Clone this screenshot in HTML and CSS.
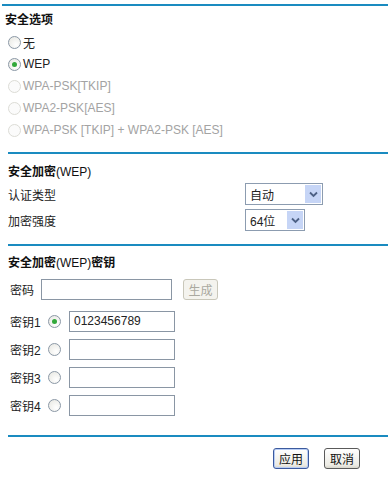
FILE: index.html
```html
<!DOCTYPE html>
<html lang="zh-CN">
<head>
    <meta charset="UTF-8">
    <title>无线安全设置</title>
    <link rel="stylesheet" href="styles.css">
</head>
<body>
    <div class="section first">
        <div class="rule"></div>
        <div class="title">安全选项</div>
        <div class="opt"><span class="radio"></span>无</div>
        <div class="opt"><span class="radio checked"></span>WEP</div>
        <div class="opt disabled"><span class="radio"></span>WPA-PSK[TKIP]</div>
        <div class="opt disabled"><span class="radio"></span>WPA2-PSK[AES]</div>
        <div class="opt disabled"><span class="radio"></span>WPA-PSK [TKIP] + WPA2-PSK [AES]</div>
    </div>

    <div class="section second">
        <div class="rule"></div>
        <div class="title">安全加密<span class="latin">(WEP)</span></div>
        <div class="field-row">
            <div class="field-label">认证类型</div>
            <div class="select wide"><span class="value">自动</span><span class="arrow"><svg width="9" height="7" viewBox="0 0 9 7"><path d="M1 1.5 L4.5 5 L8 1.5" fill="none" stroke="#4d6185" stroke-width="1.8"/></svg></span></div>
        </div>
        <div class="field-row mt4">
            <div class="field-label">加密强度</div>
            <div class="select narrow"><span class="value">64位</span><span class="arrow"><svg width="9" height="7" viewBox="0 0 9 7"><path d="M1 1.5 L4.5 5 L8 1.5" fill="none" stroke="#4d6185" stroke-width="1.8"/></svg></span></div>
        </div>
    </div>

    <div class="section third">
        <div class="rule"></div>
        <div class="title">安全加密<span class="latin">(WEP)</span>密钥</div>
        <div class="key-row pw">
            <div class="key-label short">密码</div>
            <input type="text" class="text-box long">
            <button class="btn gen" disabled>生成</button>
        </div>
        <div class="key-row k1">
            <div class="key-label">密钥1</div>
            <span class="radio checked"></span>
            <input type="text" class="text-box" value="0123456789">
        </div>
        <div class="key-row k">
            <div class="key-label">密钥2</div>
            <span class="radio"></span>
            <input type="text" class="text-box">
        </div>
        <div class="key-row k">
            <div class="key-label">密钥3</div>
            <span class="radio"></span>
            <input type="text" class="text-box">
        </div>
        <div class="key-row k">
            <div class="key-label">密钥4</div>
            <span class="radio"></span>
            <input type="text" class="text-box">
        </div>
    </div>

    <div class="section last">
        <div class="rule"></div>
        <div class="actions">
            <button class="btn apply">应用</button>
            <button class="btn">取消</button>
        </div>
    </div>
</body>
</html>
```

FILE: styles.css
```css
body {
    margin: 0;
    font-family: "Liberation Sans", Arial, "Noto Sans CJK SC", sans-serif;
    font-size: 12px;
    color: #222;
    background: #fff;
    width: 388px;
}
.rule {
    height: 2px;
    background: #1a8bc0;
    margin-left: 8px;
}
.first .rule {
    margin-top: 4px;
    margin-left: 2px;
}
.title {
    height: 22px;
    line-height: 22px;
    font-weight: bold;
    padding-left: 6px;
    color: #111;
}
.title .latin {
    font-weight: normal;
}
.first .title {
    margin-top: 3px;
    padding-left: 5px;
}
.second .title {
    margin-top: 7px;
    padding-left: 8px;
}
.third .title {
    margin-top: 6px;
    padding-left: 8px;
}
.opt {
    height: 22px;
    display: flex;
    align-items: center;
    padding-left: 8px;
}
.opt .radio {
    margin-right: 2px;
}
.opt.disabled {
    color: #a3a3a3;
}
.opt.disabled .radio {
    border-color: #dcdcd6;
    background: #fbfbfb;
}
.first {
    padding-bottom: 11px;
}
.radio {
    display: inline-block;
    width: 11px;
    height: 11px;
    border: 1px solid #8b98a6;
    border-radius: 50%;
    background: radial-gradient(circle at 65% 70%, #fff 0, #e6e6e0 100%);
    position: relative;
    flex: none;
}
.radio.checked::after {
    content: "";
    position: absolute;
    left: 3px;
    top: 3px;
    width: 5px;
    height: 5px;
    border-radius: 50%;
    background: #32a83a;
}
.second {
    padding-bottom: 13px;
}
.field-row {
    display: flex;
    align-items: center;
    height: 22px;
    padding-left: 8px;
}
.mt4 {
    margin-top: 4px;
}
.field-label {
    width: 237px;
}
.select {
    box-sizing: border-box;
    height: 22px;
    border: 1px solid #8c9cb0;
    display: flex;
    align-items: center;
    justify-content: space-between;
    padding: 1px;
    background: #fff;
}
.select.wide {
    width: 78px;
}
.select.narrow {
    width: 60px;
}
.select .value {
    padding-left: 3px;
    font-size: 12px;
}
.select .arrow {
    width: 16px;
    height: 18px;
    background: #c6d5f6;
    display: flex;
    align-items: center;
    justify-content: center;
}
.third {
    padding-bottom: 19px;
}
.key-row {
    display: flex;
    align-items: center;
    height: 22px;
    padding-left: 10px;
}
.key-row.pw {
    margin-top: 4px;
}
.key-row.k1 {
    margin-top: 10px;
}
.key-row.k {
    margin-top: 6px;
}
.key-label {
    width: 38px;
}
.key-label.short {
    width: 31px;
}
.key-row .radio {
    margin-right: 8px;
}
.text-box {
    box-sizing: border-box;
    width: 106px;
    height: 21px;
    border: 1px solid #8a96a4;
    padding: 0 4px;
    margin: 0;
    font-family: "Liberation Sans", Arial, sans-serif;
    font-size: 12px;
    color: #222;
}
.text-box.long {
    width: 131px;
}
.btn {
    box-sizing: border-box;
    width: 36px;
    height: 21px;
    padding: 0;
    margin: 0;
    border: 1px solid #5a5a5a;
    border-radius: 3px;
    background: linear-gradient(#ffffff, #ecebe4 85%, #d8d6cc);
    font-family: "Noto Sans CJK SC", sans-serif;
    font-size: 12px;
    color: #111;
}
.btn.gen {
    margin-left: 11px;
    width: 35px;
    border-color: #c9c7ba;
    color: #aaa9a0;
    background: #f4f3ee;
}
.btn.apply {
    border-color: #3c5a9e;
    box-shadow: inset 0 0 0 1px #b8cdf5;
}
.actions {
    display: flex;
    justify-content: flex-end;
    gap: 15px;
    margin-top: 11px;
    padding-right: 28px;
}
```
